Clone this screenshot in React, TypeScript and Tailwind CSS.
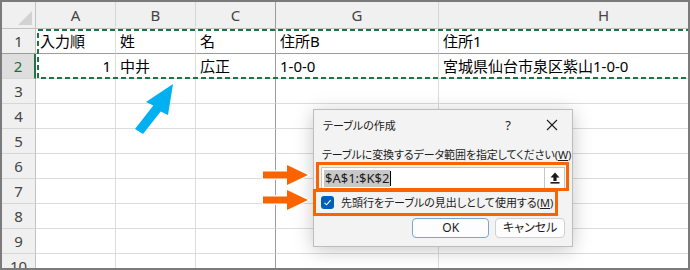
import React from 'react';

// 列見出し
const COLUMNS = ['A', 'B', 'C', 'G', 'H'];

// セルの内容 (1行目と2行目のみ)
const ROWS: { text: string; right?: boolean }[][] = [
  [{ text: '入力順' }, { text: '姓' }, { text: '名' }, { text: '住所B' }, { text: '住所1' }],
  [{ text: '1', right: true }, { text: '中井' }, { text: '広正' }, { text: '1-0-0' }, { text: '宮城県仙台市泉区紫山1-0-0' }],
];

function ColumnHeader({ label, index }: { label: string; index: number }) {
  const right = index === 2 ? 'border-r-[#9c9c9c]' : 'border-r-[#d6d6d6]';
  return (
    <div
      className={`flex items-center justify-center border-r border-b border-b-[#c2c2c2] bg-[#f0f0f0] text-[15px] text-[#444] ${right}`}
    >
      {label}
    </div>
  );
}

function RowHeader({ n }: { n: number }) {
  const bottom = n === 1 ? 'border-b-[#9c9c9c]' : 'border-b-[#d6d6d6]';
  if (n === 2) {
    return (
      <div
        className={`flex items-center justify-center border-r-2 border-b border-r-[#217346] bg-[#dedede] text-[15px] text-[#1e6b41] ${bottom}`}
      >
        {n}
      </div>
    );
  }
  return (
    <div
      className={`flex items-center justify-center border-r border-b border-r-[#c2c2c2] bg-[#f0f0f0] text-[15px] text-[#444] ${bottom}`}
    >
      {n}
    </div>
  );
}

function Cell({ row, col, text, right }: { row: number; col: number; text?: string; right?: boolean }) {
  const r = col === 2 ? 'border-r-[#9c9c9c]' : 'border-r-[#dcdcdc]';
  const b = row === 1 ? 'border-b-[#9c9c9c]' : 'border-b-[#dcdcdc]';
  return (
    <div
      className={`flex items-center overflow-visible whitespace-nowrap border-r border-b px-[4px] text-[15px] text-black ${r} ${b} ${
        right ? 'justify-end' : 'justify-start'
      }`}
    >
      {text}
    </div>
  );
}

function Sheet() {
  const rowNums = [1, 2, 3, 4, 5, 6, 7, 8, 9, 10];
  return (
    <div className="grid grid-cols-[34px_80px_80px_80px_163px_330px] grid-rows-[27px_repeat(10,25px)] font-['Noto_Sans','Noto_Sans_CJK_JP',sans-serif] leading-none">
      {/* 左上の角 */}
      <div className="relative border-r border-b border-r-[#c2c2c2] border-b-[#c2c2c2] bg-[#f0f0f0]">
        <div className="absolute right-[3px] bottom-[3px] h-0 w-0 border-l-[14px] border-b-[14px] border-l-transparent border-b-[#d2d2d2]" />
      </div>
      {COLUMNS.map((c, i) => (
        <ColumnHeader key={c} label={c} index={i} />
      ))}

      {rowNums.map((n) => (
        <React.Fragment key={n}>
          <RowHeader n={n} />
          {COLUMNS.map((c, i) => {
            const data = ROWS[n - 1]?.[i];
            return <Cell key={c} row={n} col={i} text={data?.text} right={data?.right} />;
          })}
        </React.Fragment>
      ))}
    </div>
  );
}

function CloseIcon() {
  return (
    <svg width="12" height="12" viewBox="0 0 12 12" className="block">
      <path d="M1 1 L11 11 M11 1 L1 11" stroke="#1b1b1b" strokeWidth="1.1" fill="none" />
    </svg>
  );
}

function UploadIcon() {
  return (
    <svg width="10" height="12" viewBox="0 0 10 12" className="block">
      <path d="M5 0.5 L9.5 5.5 H6.6 V9 H3.4 V5.5 H0.5 Z" fill="#1b1b1b" />
      <rect x="0.5" y="10" width="9" height="1.6" fill="#1b1b1b" />
    </svg>
  );
}

function TableDialog() {
  return (
    <div className="absolute left-[313px] top-[109px] h-[138px] w-[260px] whitespace-nowrap border border-[#bdbdbd] bg-[#f3f3f3] text-[12px] leading-none text-[#1b1b1b] shadow-[0_3px_18px_rgba(0,0,0,0.22)] font-['Noto_Sans','Noto_Sans_CJK_JP',sans-serif] [font-feature-settings:'palt']">
      {/* タイトルバー */}
      <div className="flex h-[30px] items-center pl-[9px] pr-[14px]">
        <span className="flex-1 text-[11px]">テーブルの作成</span>
        <span className="mr-[33px] w-[10px] text-center text-[13px]">?</span>
        <CloseIcon />
      </div>

      <div className="px-[7px]">
        <div className="mt-[6px] flex h-[16px] items-center pl-[1px] text-[11px] tracking-[-0.1px]">
          テーブルに変換するデータ範囲を指定してください(<span className="underline">W</span>)
        </div>

        {/* 範囲入力 */}
        <div className="mt-[5px] flex h-[22px]">
          <div className="flex w-[227px] items-center border border-[#c6c6c6] bg-white pl-[2px]">
            <span className="bg-[#c8c8c8] px-[1px] text-[13px] leading-[17px]">$A$1:$K$2</span>
            <span className="h-[15px] w-px bg-black" />
          </div>
          <div className="flex w-[20px] items-center justify-center border border-l-0 border-[#c6c6c6] bg-white">
            <UploadIcon />
          </div>
        </div>

        {/* チェックボックス */}
        <div className="mt-[5px] flex h-[17px] items-center">
          <div className="flex h-[13px] w-[13px] items-center justify-center rounded-[3px] bg-[#005fb8]">
            <svg width="9" height="9" viewBox="0 0 9 9">
              <path d="M1.5 4.8 L3.6 6.8 L7.6 2.2" stroke="white" strokeWidth="1.1" fill="none" />
            </svg>
          </div>
          <span className="ml-[7px] text-[11px]">
            先頭行をテーブルの見出しとして使用する(<span className="underline">M</span>)
          </span>
        </div>

        {/* ボタン */}
        <div className="mt-[7px] flex h-[20px] pl-[91px]">
          <button className="flex w-[79px] items-center justify-center rounded-[4px] border border-[#7da4cf] bg-[#fdfdfd] text-[12px]">
            OK
          </button>
          <button className="ml-[6px] flex w-[71px] items-center justify-center rounded-[4px] border border-[#d0d0d0] bg-[#fdfdfd] text-[12px]">
            キャンセル
          </button>
        </div>
      </div>
    </div>
  );
}

function Annotations() {
  return (
    <>
      {/* 強調枠 */}
      <div className="pointer-events-none absolute left-[316px] top-[162px] h-[29px] w-[253px] border-[3px] border-[#fa6400]" />
      <div className="pointer-events-none absolute left-[313px] top-[189px] h-[27px] w-[245px] border-[3px] border-[#fa6400]" />

      <svg className="pointer-events-none absolute left-0 top-0" width="690" height="270">
        {/* 選択範囲の点線 */}
        <rect x="38" y="30" width="700" height="48" fill="none" stroke="#217346" strokeWidth="2" strokeDasharray="5 3" />
        {/* 青い矢印 */}
        <polygon points="173,84 168,115 160.7,111.4 143,134 135,129 153.3,105.6 146,102" fill="#00b0f0" />
        {/* オレンジの矢印 */}
        <polygon
          points="263,171.5 287,171.5 287,165 308,175 287,185 287,178.5 263,178.5"
          fill="#fa6400"
          stroke="white"
          strokeWidth="2.5"
          paintOrder="stroke"
          strokeLinejoin="miter"
        />
        <polygon
          points="263,196.5 287,196.5 287,190 308,200 287,210 287,203.5 263,203.5"
          fill="#fa6400"
          stroke="white"
          strokeWidth="2.5"
          paintOrder="stroke"
          strokeLinejoin="miter"
        />
      </svg>
    </>
  );
}

export default function App() {
  return (
    <div className="relative h-[270px] w-[690px] overflow-hidden bg-white p-[2px]">
      <Sheet />
      <TableDialog />
      <Annotations />
      <div className="pointer-events-none absolute inset-0 border-2 border-[#7b7b7b]" />
    </div>
  );
}
